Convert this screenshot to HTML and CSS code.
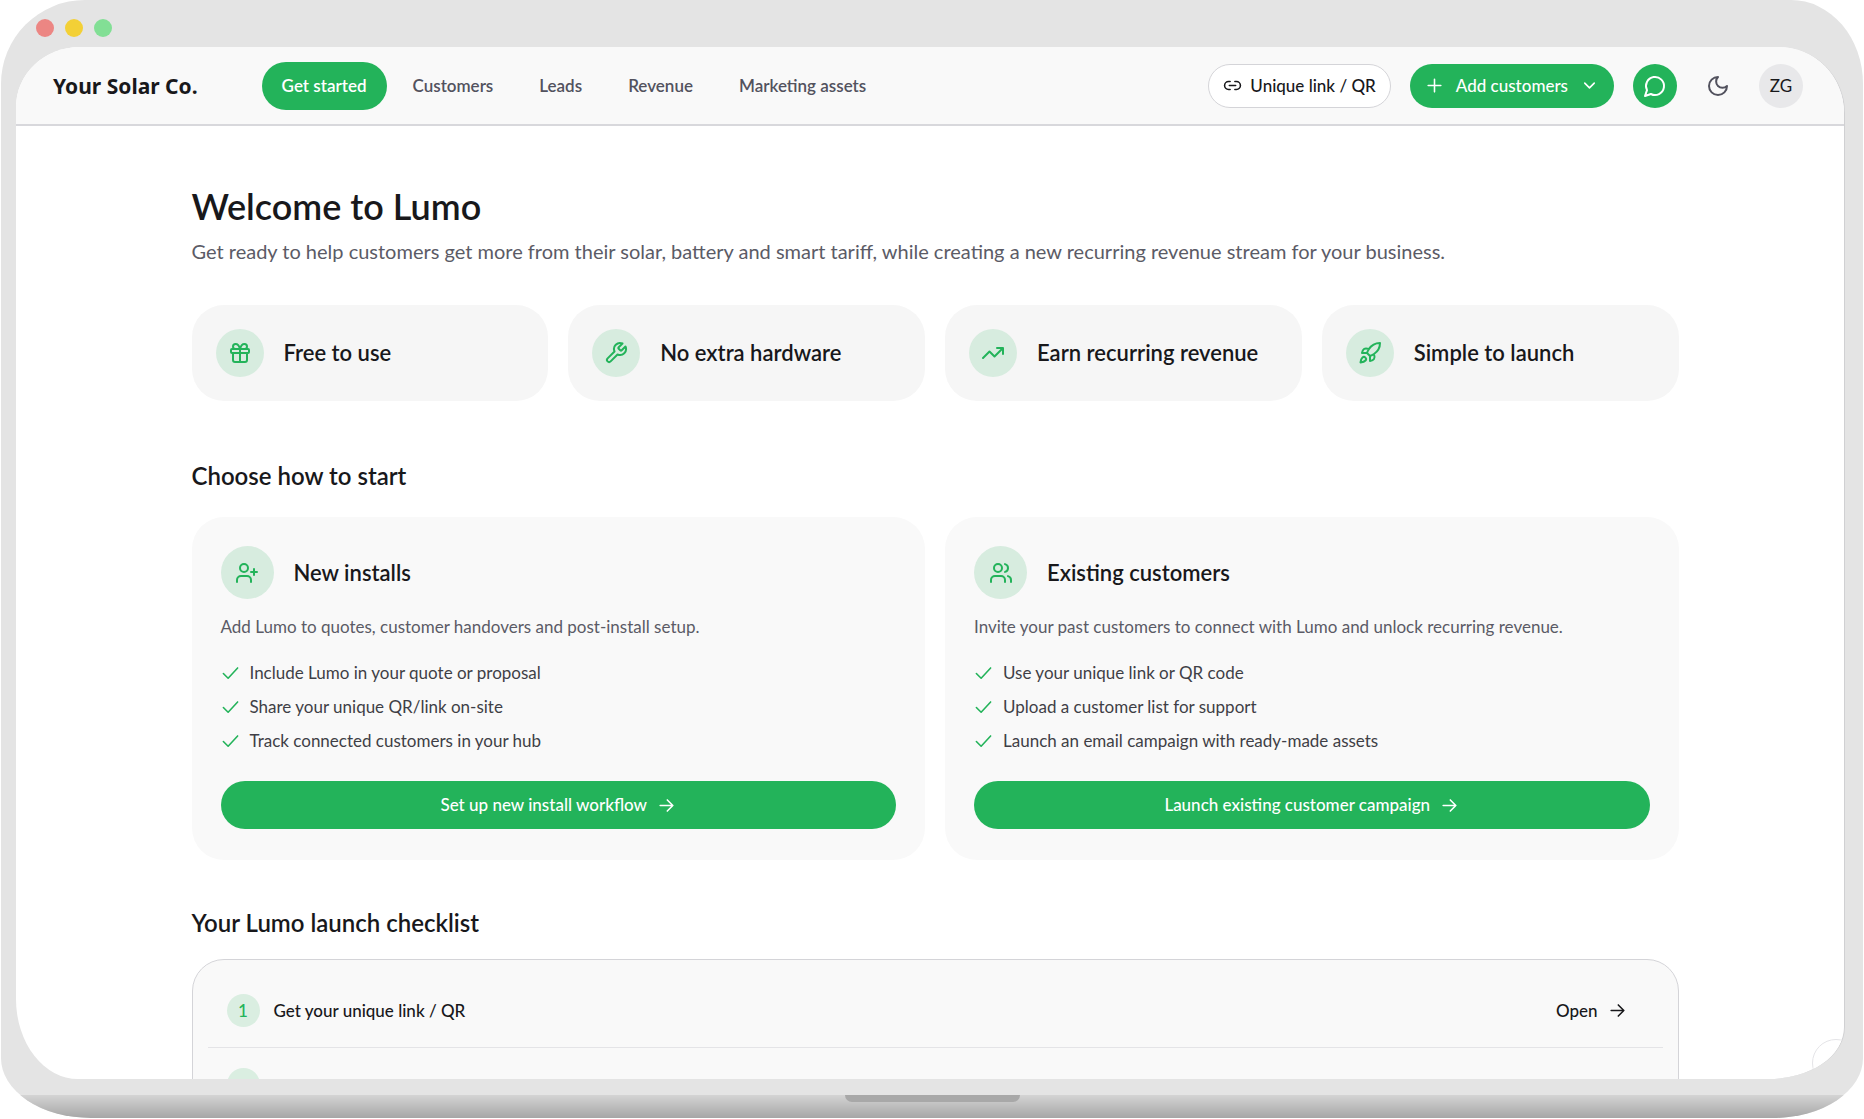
FILE: index.html
```html
<!doctype html>
<html lang="en">
<head>
<meta charset="utf-8">
<title>Your Solar Co.</title>
<link rel="stylesheet" href="styles.css">
</head>

<body>
<div class="laptop">
	<div class="dots">
		<span class="dot red"></span>
		<span class="dot yellow"></span>
		<span class="dot green"></span>
	</div>

	<div class="screen">
		<header class="topbar">
			<a class="brand" href="#">Your Solar Co.</a>
			<nav class="nav">
				<a class="active" href="#">Get started</a>
				<a href="#">Customers</a>
				<a href="#">Leads</a>
				<a href="#">Revenue</a>
				<a href="#">Marketing assets</a>
			</nav>
			<div class="actions">
				<button class="btn btn-outline" type="button">
					<svg class="icon" viewBox="0 0 24 24"><path d="M9 17H7A5 5 0 0 1 7 7h2M15 7h2a5 5 0 1 1 0 10h-2M8 12h8"/></svg>
					Unique link / QR
				</button>
				<button class="btn btn-add" type="button">
					<svg class="icon" viewBox="0 0 24 24"><path d="M4 12h16M12 4v16"/></svg>
					Add customers
					<svg class="icon" viewBox="0 0 24 24"><path d="m6 9 6 6 6-6"/></svg>
				</button>
				<button class="round chat" type="button" aria-label="Chat">
					<svg class="icon" viewBox="0 0 24 24"><path d="M7.9 20A9 9 0 1 0 4 16.1L2 22Z"/></svg>
				</button>
				<button class="round theme" type="button" aria-label="Dark mode">
					<svg class="icon" viewBox="0 0 24 24"><path d="M12 3a6 6 0 0 0 9 9 9 9 0 1 1-9-9Z"/></svg>
				</button>
				<button class="round avatar" type="button">ZG</button>
			</div>
		</header>

		<main class="content">
			<h1>Welcome to Lumo</h1>
			<p class="lead">Get ready to help customers get more from their solar, battery and smart tariff, while creating a new recurring revenue stream for your business.</p>

			<ul class="perks">
				<li>
					<span class="badge"><svg class="icon" viewBox="0 0 24 24"><rect x="3" y="8" width="18" height="4" rx="1"/><path d="M12 8v13M19 12v7a2 2 0 0 1-2 2H7a2 2 0 0 1-2-2v-7M7.5 8a2.5 2.5 0 0 1 0-5A4.8 8 0 0 1 12 8a4.8 8 0 0 1 4.5-5 2.5 2.5 0 0 1 0 5"/></svg></span>
					Free to use
				</li>
				<li>
					<span class="badge"><svg class="icon" viewBox="0 0 24 24"><path d="M14.7 6.3a1 1 0 0 0 0 1.4l1.6 1.6a1 1 0 0 0 1.4 0l3.77-3.77a6 6 0 0 1-7.94 7.94l-6.91 6.91a2.12 2.12 0 0 1-3-3l6.91-6.91a6 6 0 0 1 7.94-7.94l-3.76 3.76z"/></svg></span>
					No extra hardware
				</li>
				<li>
					<span class="badge"><svg class="icon" viewBox="0 0 24 24"><path d="M22 7l-8.5 8.5-5-5L2 17M16 7h6v6"/></svg></span>
					Earn recurring revenue
				</li>
				<li>
					<span class="badge"><svg class="icon" viewBox="0 0 24 24"><path d="M4.5 16.5c-1.5 1.26-2 5-2 5s3.74-.5 5-2c.71-.84.7-2.13-.09-2.91a2.18 2.18 0 0 0-2.91-.09zM12 15l-3-3a22 22 0 0 1 2-3.95A12.88 12.88 0 0 1 22 2c0 2.72-.78 7.5-6 11a22.35 22.35 0 0 1-4 2zM9 12H4s.55-3.03 2-4c1.62-1.08 5 0 5 0M12 15v5s3.03-.55 4-2c1.08-1.62 0-5 0-5"/></svg></span>
					Simple to launch
				</li>
			</ul>

			<h2>Choose how to start</h2>
			<div class="paths">
				<section class="card">
					<div class="card-head">
						<span class="badge"><svg class="icon" viewBox="0 0 24 24"><path d="M16 21v-2a4 4 0 0 0-4-4H6a4 4 0 0 0-4 4v2M19 8v6M22 11h-6"/><circle cx="9" cy="7" r="4"/></svg></span>
						<h3>New installs</h3>
					</div>
					<p>Add Lumo to quotes, customer handovers and post-install setup.</p>
					<ul class="ticks">
						<li><svg class="icon" viewBox="0 0 24 24"><path d="M21 5 9 18l-6-6"/></svg>Include Lumo in your quote or proposal</li>
						<li><svg class="icon" viewBox="0 0 24 24"><path d="M21 5 9 18l-6-6"/></svg>Share your unique QR/link on-site</li>
						<li><svg class="icon" viewBox="0 0 24 24"><path d="M21 5 9 18l-6-6"/></svg>Track connected customers in your hub</li>
					</ul>
					<button class="btn btn-wide" type="button">
						Set up new install workflow
						<svg class="icon" viewBox="0 0 24 24"><path d="M4 12h16M13 5l7 7-7 7"/></svg>
					</button>
				</section>
				<section class="card">
					<div class="card-head">
						<span class="badge"><svg class="icon" viewBox="0 0 24 24"><path d="M16 21v-2a4 4 0 0 0-4-4H6a4 4 0 0 0-4 4v2M22 21v-2a4 4 0 0 0-3-3.87M16 3.13a4 4 0 0 1 0 7.75"/><circle cx="9" cy="7" r="4"/></svg></span>
						<h3>Existing customers</h3>
					</div>
					<p>Invite your past customers to connect with Lumo and unlock recurring revenue.</p>
					<ul class="ticks">
						<li><svg class="icon" viewBox="0 0 24 24"><path d="M21 5 9 18l-6-6"/></svg>Use your unique link or QR code</li>
						<li><svg class="icon" viewBox="0 0 24 24"><path d="M21 5 9 18l-6-6"/></svg>Upload a customer list for support</li>
						<li><svg class="icon" viewBox="0 0 24 24"><path d="M21 5 9 18l-6-6"/></svg>Launch an email campaign with ready-made assets</li>
					</ul>
					<button class="btn btn-wide" type="button">
						Launch existing customer campaign
						<svg class="icon" viewBox="0 0 24 24"><path d="M4 12h16M13 5l7 7-7 7"/></svg>
					</button>
				</section>
			</div>

			<h2>Your Lumo launch checklist</h2>
			<ol class="checklist">
				<li>
					<span class="num">1</span>
					<span class="step">Get your unique link / QR</span>
					<a class="open" href="#">Open <svg class="icon" viewBox="0 0 24 24"><path d="M4 12h16M13 5l7 7-7 7"/></svg></a>
				</li>
				<li>
					<span class="num"></span>
				</li>
			</ol>
		</main>
		<div class="bubble"></div>
	</div>

	<div class="base"><div class="notch"></div></div>
</div>
</body>
</html>
```
FILE: styles.css
```css
*{
	box-sizing: border-box;
}
body{
	margin: 0;
	background: #fff;
	color: #18181b;
	font-family: Lato, "Liberation Sans", sans-serif;
	font-size: 17px;
	line-height: 24px;
}
h1, h2, h3, p, ul, ol{
	margin: 0;
	padding: 0;
	font-weight: 600;
}
ul, ol{
	list-style: none;
}
a{
	color: inherit;
	text-decoration: none;
}
button{
	border: none;
	background: none;
	color: inherit;
	font: inherit;
	cursor: pointer;
}
.icon{
	flex: none;
	width: 19px;
	height: 19px;
	fill: none;
	stroke: currentColor;
	stroke-width: 2;
	stroke-linecap: round;
	stroke-linejoin: round;
}

/* laptop frame */
.laptop{
	display: flex;
	flex-direction: column;
	height: calc(100vh - 1px);
	margin: 0 1px;
	border-radius: 84px 72px 90px 90px / 84px 84px 60px 60px;
	background: #e4e4e4;
	overflow: hidden;
}
.dots{
	display: flex;
	flex: none;
	gap: 11px;
	height: 47px;
	padding: 19px 35px 0;
}
.dot{
	width: 18px;
	height: 18px;
	border-radius: 50%;
}
.red{
	background: #ec8683;
}
.yellow{
	background: #f3d036;
}
.green{
	background: #82df95;
}
.screen{
	position: relative;
	flex: 1;
	min-height: 0;
	margin: 0 18px 0 15px;
	border-right: 1px solid #d0d0d2;
	border-radius: 64px 66px 76px 62px / 60px 66px 52px 80px;
	background: #fff;
	overflow: hidden;
}
.base{
	flex: none;
	height: 23px;
	margin-top: 16px;
	background: linear-gradient(#d4d4d4, #a6a6a6);
}
.notch{
	width: 175px;
	height: 7px;
	margin: 0 auto;
	border-radius: 0 0 8px 8px;
	background: #a8a8a8;
}

/* top bar */
.topbar{
	display: flex;
	align-items: center;
	height: 79px;
	padding: 0 41px 0 37px;
	border-bottom: 2px solid #d8d8dc;
	background: #f9f9f9;
}
.brand{
	margin-right: 64px;
	font: bold 21px/28px "Noto Sans", sans-serif;
}
.nav{
	display: flex;
	gap: 6px;
	color: #52525e;
	font-weight: 600;
}
.nav a{
	padding: 12px 20px;
	border-radius: 24px;
}
.nav .active{
	background: #23b35a;
	color: #fff;
}
.actions{
	display: flex;
	align-items: center;
	gap: 19px;
	margin-left: auto;
}
.btn{
	display: flex;
	align-items: center;
	justify-content: center;
	gap: 10px;
	height: 44px;
	padding: 0 15px;
	border-radius: 24px;
	background: #23b35a;
	color: #fff;
	font-weight: 500;
}
.btn-outline{
	gap: 8px;
	padding: 0 14px;
	border: 1px solid #d4d4d8;
	background: #fff;
	color: #18181b;
}
.btn-add{
	gap: 12px;
}
.round{
	display: flex;
	align-items: center;
	justify-content: center;
	width: 44px;
	height: 44px;
	padding: 0;
	border-radius: 50%;
}
.round .icon{
	width: 24px;
	height: 24px;
}
.chat{
	background: #23b35a;
	color: #fff;
}
.theme{
	color: #52525e;
}
.avatar{
	background: #e8e8ea;
	font-weight: 400;
}

/* page */
.content{
	max-width: 1497px;
	margin: 0 auto;
	padding: 56px 0 0 10px;
}
h1{
	font-size: 36px;
	line-height: 48px;
}
.lead{
	margin-top: 7px;
	color: #5b5b66;
	font-size: 20px;
	font-weight: 400;
	line-height: 28px;
}
.perks{
	display: grid;
	grid-template-columns: repeat(4, 1fr);
	gap: 20px;
	margin: 40px 0 59px;
}
.perks li{
	display: flex;
	align-items: center;
	gap: 20px;
	padding: 24px;
	border-radius: 32px;
	background: #f6f6f6;
	font-size: 22px;
}
.badge{
	display: flex;
	flex: none;
	align-items: center;
	justify-content: center;
	width: 48px;
	height: 48px;
	border-radius: 50%;
	background: #d7ecdf;
	color: #23b35a;
}
.badge .icon{
	width: 24px;
	height: 24px;
}
h2{
	font-size: 24px;
	line-height: 32px;
}
.paths{
	display: grid;
	grid-template-columns: 1fr 1fr;
	gap: 20px;
	margin: 25px 0 47px;
}
.card{
	padding: 29px 29px 31px;
	border-radius: 32px;
	background: #f9f9f9;
}
.card-head{
	display: flex;
	align-items: center;
	gap: 20px;
}
.card-head .badge{
	width: 53px;
	height: 53px;
}
h3{
	font-size: 22px;
}
.card p{
	margin: 16px 0 22px;
	color: #5b5b66;
	font-weight: 400;
}
.ticks{
	color: #3f3f46;
}
.ticks li{
	display: flex;
	align-items: center;
	gap: 10px;
	margin-bottom: 10px;
	font-weight: 400;
}
.ticks .icon{
	color: #23b35a;
}
.btn-wide{
	width: 100%;
	height: 48px;
	margin-top: 28px;
}
.checklist{
	margin-top: 20px;
	padding: 14px 15px;
	border: 1px solid #d4d4d8;
	border-radius: 32px;
	background: #f9f9f9;
}
.checklist li{
	display: flex;
	align-items: center;
	gap: 14px;
	padding: 20px 36px 20px 19px;
	border-bottom: 1px solid #e4e4e7;
	font-weight: 500;
}
.num{
	width: 33px;
	height: 33px;
	border-radius: 50%;
	background: #daeee1;
	color: #23b35a;
	line-height: 33px;
	text-align: center;
}
.open{
	display: flex;
	align-items: center;
	gap: 10px;
	margin-left: auto;
}
.bubble{
	position: absolute;
	right: -16px;
	bottom: -8px;
	width: 48px;
	height: 48px;
	border: 1px solid #e4e4e7;
	border-radius: 24px;
	background: #fff;
}
```
